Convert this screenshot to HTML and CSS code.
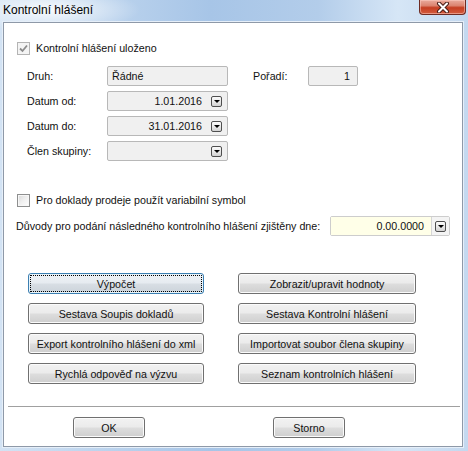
FILE: index.html
```html
<!DOCTYPE html>
<html lang="cs">
<head>
<meta charset="utf-8">
<title>Kontrolní hlášení</title>
<link rel="stylesheet" href="styles.css">
</head>
<body>
<div class="window">
  <div class="titlebar">
    <span class="title">Kontrolní hlášení</span>
    <div class="close">
      <svg width="14" height="11" viewBox="0 0 14 11">
        <path d="M3 1.5 L11 9.5 M11 1.5 L3 9.5" stroke="#4a1e18" stroke-width="4" stroke-linecap="round" fill="none"/>
        <path d="M3 1.5 L11 9.5 M11 1.5 L3 9.5" stroke="#ffffff" stroke-width="2" stroke-linecap="round" fill="none"/>
      </svg>
    </div>
  </div>
  <div class="client">
    <div class="check-row first">
      <span class="cb disabled">
        <svg width="11" height="11" viewBox="0 0 11 11"><path d="M2 5.5 L4.5 8 L9 2.5" stroke="#8c8c8c" stroke-width="1.8" fill="none"/></svg>
      </span>
      <span>Kontrolní hlášení uloženo</span>
    </div>

    <div class="fields">
      <span class="lbl">Druh:</span>
      <div class="field"><span class="val left">Řádné</span></div>
      <span class="lbl porad">Pořadí:</span>
      <div class="field"><span class="val num">1</span></div>

      <span class="lbl">Datum od:</span>
      <div class="field"><span class="val">1.01.2016</span><span class="dd"></span></div>

      <span class="lbl">Datum do:</span>
      <div class="field"><span class="val">31.01.2016</span><span class="dd"></span></div>

      <span class="lbl">Člen skupiny:</span>
      <div class="field"><span class="val"></span><span class="dd"></span></div>
    </div>

    <div class="check-row second">
      <span class="cb"></span>
      <span>Pro doklady prodeje použít variabilní symbol</span>
    </div>

    <div class="reason-row">
      <span class="reason-lbl">Důvody pro podání následného kontrolního hlášení zjištěny dne:</span>
      <div class="field yellow"><span class="val ytext">0.00.0000</span><span class="dd-wrap"><span class="dd"></span></span></div>
    </div>

    <div class="buttons">
      <button class="btn default">Výpočet</button>
      <button class="btn">Zobrazit/upravit hodnoty</button>
      <button class="btn">Sestava Soupis dokladů</button>
      <button class="btn">Sestava Kontrolní hlášení</button>
      <button class="btn">Export kontrolního hlášení do xml</button>
      <button class="btn">Importovat soubor člena skupiny</button>
      <button class="btn">Rychlá odpověď na výzvu</button>
      <button class="btn">Seznam kontrolních hlášení</button>
    </div>

    <div class="divider"></div>

    <div class="footer">
      <button class="btn small">OK</button>
      <button class="btn small">Storno</button>
    </div>
  </div>
</div>
</body>
</html>
```

FILE: styles.css
```css
* { box-sizing: border-box; }
html, body { margin: 0; padding: 0; }
body {
  width: 468px;
  height: 451px;
  overflow: hidden;
  font-family: "Liberation Sans", Arial, sans-serif;
  font-size: 10.7px;
  color: #111;
}
.window {
  width: 468px;
  height: 451px;
  display: flex;
  flex-direction: column;
  background:
    radial-gradient(ellipse 90px 22px at 50px 10px, rgba(255,255,255,0.85), rgba(255,255,255,0) 100%),
    linear-gradient(to right, #d3e3f4 0%, #bed5ee 20%, #a7c5e7 45%, #b3cdea 68%, #d6e6f6 85%, #c3d8ef 100%);
}
.titlebar {
  height: 22px;
  flex: none;
  display: flex;
  align-items: flex-start;
  justify-content: space-between;
  padding-left: 3px;
}
.title {
  font-size: 12px;
  line-height: 20px;
  color: #000;
}
.close {
  width: 47px;
  height: 15px;
  margin-right: 2px;
  border: 1px solid #6e2b22;
  border-top: none;
  border-radius: 0 0 4px 4px;
  background: linear-gradient(#e9ab9d 0%, #dc8470 40%, #c53e22 55%, #d35c3e 100%);
  box-shadow: inset 0 0 0 1px rgba(255,210,200,0.5);
  display: flex;
  align-items: center;
  justify-content: center;
}
.client {
  flex: 1;
  margin: 0 5px 4px 3px;
  border: 1px solid #8e99a8;
  box-shadow: 0 0 0 1px #e6eff9;
  background: #fff;
  display: flex;
  flex-direction: column;
  padding-top: 18px;
}
.check-row {
  display: flex;
  align-items: center;
  height: 14px;
  line-height: 14px;
  padding-left: 13px;
  gap: 6px;
}
.check-row.second { margin-top: 32px; }
.cb {
  width: 13px;
  height: 13px;
  flex: none;
  border: 1px solid #8e8f8f;
  background: linear-gradient(135deg, #d9d9d9 0%, #f0f0f0 50%, #fefefe 100%);
  box-shadow: inset 0 0 0 1px #f7f7f7;
  display: flex;
  align-items: center;
  justify-content: center;
}
.cb.disabled {
  border-color: #b4b4b4;
  background: #f4f4f4;
  box-shadow: none;
}
.fields {
  margin-top: 11px;
  padding-left: 23px;
  display: grid;
  grid-template-columns: 80px 121px 25px 55px 50px;
  grid-auto-rows: 20px;
  row-gap: 5px;
}
.lbl {
  grid-column: 1;
  align-self: center;
  line-height: 14px;
}
.lbl.porad { grid-column: 4; }
.field {
  height: 20px;
  border: 1px solid #b8b8b8;
  border-radius: 2px;
  background: #f0f0f0;
  display: flex;
  align-items: center;
}
.val {
  flex: 1;
  text-align: right;
  padding-right: 9px;
  line-height: 16px;
  white-space: nowrap;
}
.val.left { text-align: left; padding-left: 4px; padding-right: 0; }
.val.num { padding-right: 7px; }
.dd {
  width: 11px;
  height: 11px;
  flex: none;
  margin-right: 5px;
  border: 1px solid #4f4f4f;
  border-radius: 2px;
  background: linear-gradient(#fbfbfb 0%, #e9e9e9 50%, #d2d2d2 100%);
  display: flex;
  align-items: center;
  justify-content: center;
}
.dd::after {
  content: "";
  width: 0;
  height: 0;
  border-left: 3px solid transparent;
  border-right: 3px solid transparent;
  border-top: 3px solid #000;
  margin-top: 1px;
}
.reason-row {
  margin-top: 9px;
  height: 20px;
  display: flex;
  align-items: center;
  padding-left: 12px;
  padding-right: 12px;
}
.reason-lbl { line-height: 14px; white-space: nowrap; }
.field.yellow {
  margin-left: auto;
  width: 120px;
  background: #fff;
  border-color: #cdcdcd;
}
.ytext {
  align-self: stretch;
  display: flex;
  align-items: center;
  justify-content: flex-end;
  background: #ffffe8;
  border-right: 1px solid #d6d6d6;
  padding-right: 7px;
}
.dd-wrap {
  width: 17px;
  align-self: stretch;
  display: flex;
  align-items: center;
  justify-content: center;
  background: #f4f4f4;
}
.dd-wrap .dd { margin-right: 0; }
.buttons {
  margin-top: 37px;
  padding-left: 24px;
  display: grid;
  grid-template-columns: 176px 178px;
  grid-auto-rows: 21px;
  column-gap: 34px;
  row-gap: 9px;
}
.btn {
  font: inherit;
  color: #111;
  height: 21px;
  padding: 0;
  margin: 0;
  border: 1px solid #707070;
  border-radius: 3px;
  background: linear-gradient(#f2f2f2 0%, #ebebeb 48%, #dddddd 52%, #cfcfcf 100%);
  box-shadow: inset 0 0 0 1px #fbfbfb;
  display: flex;
  align-items: center;
  justify-content: center;
  line-height: 14px;
  white-space: nowrap;
}
.btn.default {
  border-color: #3c7fb1;
  box-shadow: inset 0 0 0 1px #e8f4fb;
  background: linear-gradient(#eef2f6 0%, #e6ebf0 48%, #d8dee4 52%, #cbd3da 100%);
  outline: 1px dotted #000;
  outline-offset: -3px;
}
.divider {
  margin-top: 22px;
  margin-left: 4px;
  margin-right: 2px;
  height: 1px;
  background: #a0a0a0;
}
.footer {
  margin-top: 10px;
  padding-left: 69px;
  display: flex;
  gap: 128px;
}
.btn.small { width: 72px; }
```
